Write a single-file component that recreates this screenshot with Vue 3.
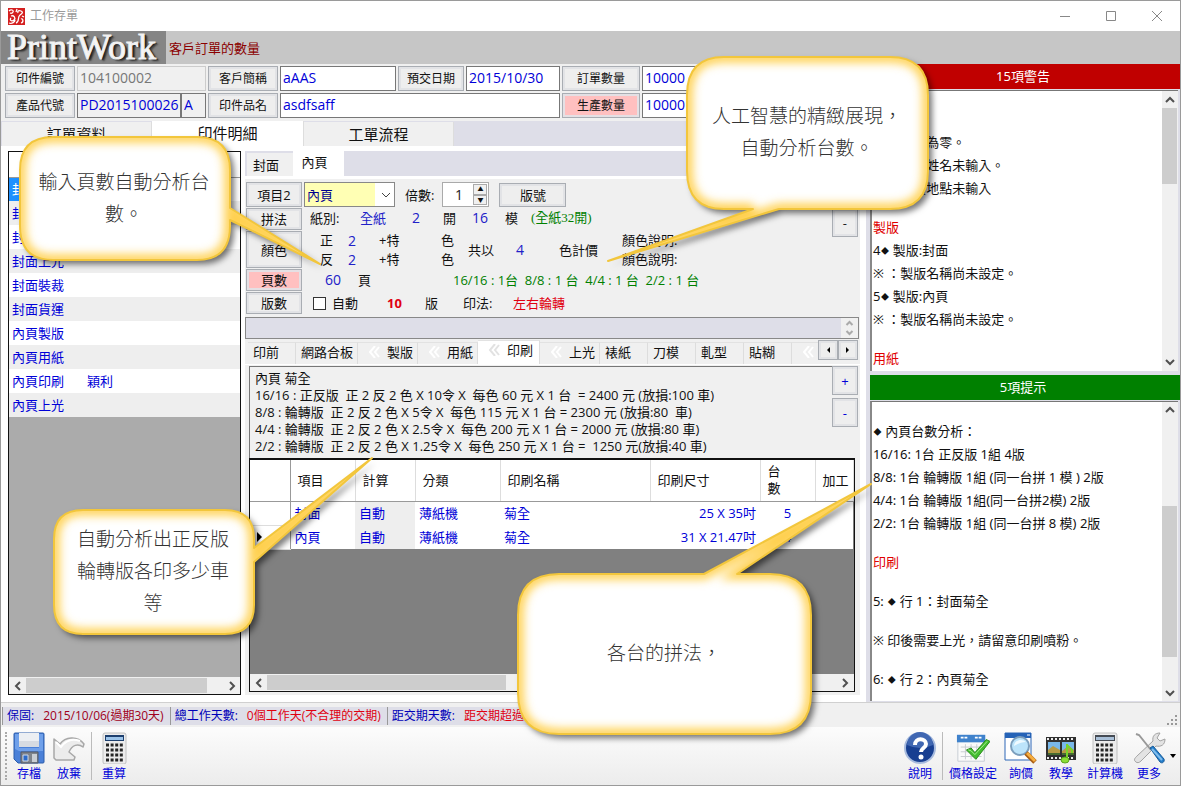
<script setup>
import { ref } from 'vue'

const mainTabs = ['訂單資料', '印件明細', '工單流程']
const activeMain = ref(1)

const steps = [
  ['封面', ''], ['封面用紙', ''], ['封面印刷', ''], ['封面上光', ''], ['封面裝裁', ''],
  ['封面貨運', ''], ['內頁製版', ''], ['內頁用紙', ''], ['內頁印刷', '穎利'], ['內頁上光', '']
]

const processTabs = [
  { name: '印前', w: 'w48' },
  { name: '網路合板', w: 'w62' },
  { name: '製版', w: 'w60', mark: true },
  { name: '用紙', w: 'w60', mark: true },
  { name: '印刷', w: 'w62', mark: true, active: true },
  { name: '上光', w: 'w60', mark: true },
  { name: '裱紙', w: 'w48' },
  { name: '刀模', w: 'w48' },
  { name: '軋型', w: 'w48' },
  { name: '貼糊', w: 'w48' },
  { name: '', w: 'rest', mark: true }
]

const pressLines = [
  '內頁 菊全',
  '16/16 : 正反版  正 2 反 2 色 X 10令 X  每色 60 元 X 1 台  = 2400 元 (放損:100 車)',
  '8/8 : 輪轉版  正 2 反 2 色 X 5令 X  每色 115 元 X 1 台 = 2300 元 (放損:80  車)',
  '4/4 : 輪轉版  正 2 反 2 色 X 2.5令 X  每色 200 元 X 1 台 = 2000 元 (放損:80 車)',
  '2/2 : 輪轉版  正 2 反 2 色 X 1.25令 X  每色 250 元 X 1 台 =  1250 元(放損:40 車)'
].join('\n')

const pressRows = [
  ['封面', '自動', '薄紙機', '菊全', '25 X 35吋', '5'],
  ['內頁', '自動', '薄紙機', '菊全', '31 X 21.47吋', '4']
]

const warnings = [
  { t: '※ ：數量為零。' },
  { t: '※ ：客戶姓名未輸入。' },
  { t: '※ ：送貨地點未輸入' },
  { t: '製版', head: true },
  { t: '4◆ 製版:封面' },
  { t: '※ ：製版名稱尚未設定。' },
  { t: '5◆ 製版:內頁' },
  { t: '※ ：製版名稱尚未設定。' },
  { t: '用紙', head: true }
]
const hints = [
  { t: '◆ 內頁台數分析：' },
  { t: '16/16: 1台 正反版 1組 4版' },
  { t: '8/8: 1台 輪轉版 1組 (同一台拼 1 模 ) 2版' },
  { t: '4/4: 1台 輪轉版 1組(同一台拼2模) 2版' },
  { t: '2/2: 1台 輪轉版 1組 (同一台拼 8 模) 2版' },
  { t: '印刷', head: true },
  { t: '5: ◆ 行 1：封面菊全', gap: true },
  { t: '※ 印後需要上光，請留意印刷噴粉。', gap: true },
  { t: '6: ◆ 行 2：內頁菊全', gap: true }
]
const parts = (t) => t.split(/(◆)/)

const callouts = [
  { id: 'pages', w: 330, h: 150, lines: ['輸入頁數自動分析台', '數。'],
    d: 'M34 1H178Q211 1 211 34V72L301 128L211 84V90Q211 124 178 124H34Q1 124 1 90V34Q1 1 34 1Z' },
  { id: 'signatures', w: 350, h: 230, lines: ['人工智慧的精緻展現，', '自動分析台數。'],
    d: 'M117 1H283Q321 1 321 39V115Q321 153 283 153H172L1 205L146 153H117Q80 153 80 115V39Q80 1 117 1Z' },
  { id: 'runs', w: 340, h: 200, lines: ['自動分析出正反版', '輪轉版各印多少車', '等'],
    d: 'M30 53H172Q201 53 201 82V91L319 1L201 105V148Q201 177 172 177H30Q1 177 1 148V82Q1 53 30 53Z' },
  { id: 'imposition', w: 380, h: 270, lines: ['各台的拼法，'],
    d: 'M42 91H187L354 1L220 91H253Q294 91 294 132V210Q294 251 253 251H42Q1 251 1 210V132Q1 91 42 91Z' }
]
</script>

<template>
  <div class="window" lang="zh-TW">
    <header class="titlebar">
      <svg class="app-icon" viewBox="0 0 17 17" aria-hidden="true">
        <rect width="17" height="17" fill="#d42020" />
        <path d="M1 3c2-2 5-1 4 1s-3 1-3 1M3 8c3-1 5 2 3 4s-5 0-3-2M8 15c4-1 1-6 4-8s3-3 1-4-4 0-3 2M1 15c3 1 6-1 6-3M13 15c3-1 2-5 0-4M14 8l2 1M9 1L8 4" fill="none" stroke="#fff" stroke-width="1.3" />
      </svg>
      <h1>工作存單</h1>
      <button class="win-btn" aria-label="最小化"><svg viewBox="0 0 12 12"><path d="M1 6.500h10" /></svg></button>
      <button class="win-btn" aria-label="最大化"><svg viewBox="0 0 12 12"><path d="M1.500 1.500h9v9h-9z" /></svg></button>
      <button class="win-btn" aria-label="關閉"><svg viewBox="0 0 12 12"><path d="M1 1l10 10M11 1L1 11" /></svg></button>
    </header>

    <div class="banner">
      <div class="brand">PrintWork</div>
      <div class="banner-text">客戶訂單的數量</div>
    </div>

    <div class="body">
      <main class="left">
        <form class="fields" @submit.prevent>
          <div class="frow">
            <label class="raised l70" for="f1">印件編號</label>
            <input id="f1" class="box i129 off" value="104100002" readonly />
            <label class="raised l70" for="f2">客戶簡稱</label>
            <input id="f2" class="box i116" value="aAAS" />
            <label class="raised l66" for="f3">預交日期</label>
            <input id="f3" class="box i94" value="2015/10/30" />
            <label class="raised l78" for="f4">訂單數量</label>
            <input id="f4" class="box grow" value="10000" />
          </div>
          <div class="frow">
            <label class="raised l70" for="f5">產品代號</label>
            <div class="pair i129">
              <input id="f5" class="box grow off2" value="PD2015100026" />
              <input class="box i26 off2" value="A" aria-label="版次" />
            </div>
            <label class="raised l70" for="f6">印件品名</label>
            <input id="f6" class="box i280" value="asdfsaff" />
            <label class="raised pink l78" for="f7">生產數量</label>
            <input id="f7" class="box grow" value="10000" />
          </div>
        </form>

        <nav class="main-tabs">
          <button v-for="(t, i) in mainTabs" :key="t" :class="{ on: activeMain === i }" @click="activeMain = i">{{ t }}</button>
        </nav>

        <div class="page">
          <section class="steps">
            <table>
              <thead><tr><th>工序</th><th></th></tr></thead>
              <tbody>
                <tr v-for="(s, i) in steps" :key="i" :class="{ sel: i === 0 }"><td>{{ s[0] }}</td><td>{{ s[1] }}</td></tr>
              </tbody>
            </table>
            <div class="hbar">
              <button aria-label="向左"><svg viewBox="0 0 8 10"><path d="M6 1L2 5l4 4" /></svg></button>
              <div class="track"><div class="thumb wide"></div></div>
              <button aria-label="向右"><svg viewBox="0 0 8 10"><path d="M2 1l4 4-4 4" /></svg></button>
            </div>
          </section>

          <section class="detail">
            <nav class="sub-tabs"><button>封面</button><button class="on">內頁</button></nav>

            <div class="spec">
              <div class="spec-keys">
                <button class="raised h25">項目2</button>
                <button class="raised h22">拼法</button>
                <button class="raised h37">顏色</button>
                <button class="raised pink h22">頁數</button>
                <button class="raised h22">版數</button>
              </div>
              <div class="spec-vals">
                <div class="line item">
                  <div class="combo">
                    <select aria-label="項目"><option>內頁</option></select>
                    <svg viewBox="0 0 10 6" aria-hidden="true"><path d="M1 1l4 4 4-4" /></svg>
                  </div>
                  <label for="mult">倍數:</label>
                  <div class="spin">
                    <input id="mult" value="1" />
                    <div><button aria-label="增加">▲</button><button aria-label="減少">▼</button></div>
                  </div>
                  <button class="raised plate">版號</button>
                </div>
                <div class="line cols paper">
                  <span>紙別:</span><b>全紙</b><b>2</b><span>開</span><b>16</b><span>模</span><i>(全紙32開)</i>
                </div>
                <div class="colors">
                  <div class="side"><span>正</span><b>2</b><span>+特</span><span>色</span></div>
                  <div class="side"><span>反</span><b>2</b><span>+特</span><span>色</span></div>
                  <div class="total"><span>共以</span><b>4</b><span>色計價</span></div>
                  <div class="note n1">顏色說明:</div>
                  <div class="note n2">顏色說明:</div>
                </div>
                <div class="line cols count">
                  <b>60</b><span>頁</span><i>16/16 : 1台&nbsp; 8/8 : 1 台&nbsp; 4/4 : 1 台&nbsp; 2/2 : 1 台</i>
                </div>
                <div class="line cols plates">
                  <label><input type="checkbox" />自動</label><strong>10</strong><span>版</span><span>印法:</span><em>左右輪轉</em>
                </div>
              </div>
              <div class="pm top"><button class="raised">+</button><button class="raised">-</button></div>
            </div>

            <div class="memo">
              <span></span>
              <svg viewBox="0 0 16 20" aria-hidden="true"><path d="M5 7l3-3 3 3M5 13l3 3 3-3" /></svg>
            </div>

            <nav class="proc-tabs">
              <button v-for="(p, i) in processTabs" :key="i" :class="[p.w, { on: p.active }]" :aria-label="p.name || '其他'">
                <svg v-if="p.mark" viewBox="0 0 12 12" aria-hidden="true"><path d="M7 0L2 6l5 6M11 1L7 6l4 5" /></svg>
                <span>{{ p.name }}</span>
              </button>
              <div class="tab-nav"><button class="raised" aria-label="前一頁籤"><svg viewBox="0 0 6 8"><path d="M5 1v6L2 4z" /></svg></button><button class="raised" aria-label="後一頁籤"><svg viewBox="0 0 6 8"><path d="M1 1v6l3-3z" /></svg></button></div>
            </nav>

            <div class="press">
              <div class="press-top">
                <pre>{{ pressLines }}</pre>
                <div class="pm"><button class="raised">+</button><button class="raised">-</button></div>
              </div>
              <div class="grid">
                <table>
                  <colgroup><col class="c40" /><col class="c65" /><col class="c60" /><col class="c85" /><col class="c150" /><col class="c110" /><col class="c55" /><col /></colgroup>
                  <thead><tr><th></th><th>項目</th><th>計算</th><th>分類</th><th>印刷名稱</th><th>印刷尺寸</th><th>台<br />數</th><th>加工</th></tr></thead>
                  <tbody>
                    <tr v-for="(r, i) in pressRows" :key="i">
                      <td class="mark"><svg v-if="i === 1" viewBox="0 0 6 10"><path d="M0 0l5 5-5 5z" /></svg></td>
                      <td>{{ r[0] }}</td><td class="auto">{{ r[1] }}</td><td>{{ r[2] }}</td><td>{{ r[3] }}</td>
                      <td class="num">{{ r[4] }}</td><td class="mid">{{ r[5] }}</td><td></td>
                    </tr>
                  </tbody>
                </table>
                <div class="hbar">
                  <button aria-label="向左"><svg viewBox="0 0 8 10"><path d="M6 1L2 5l4 4" /></svg></button>
                  <div class="track"><div class="thumb half"></div></div>
                  <button aria-label="向右"><svg viewBox="0 0 8 10"><path d="M2 1l4 4-4 4" /></svg></button>
                </div>
              </div>
            </div>
          </section>
        </div>
      </main>

      <aside class="right">
        <h2 class="red">15項警告</h2>
        <section class="log warn">
          <div class="text">
            <p v-for="(l, i) in warnings" :key="i" :class="{ head: l.head }"><span v-for="(s, j) in parts(l.t)" :key="j" :class="{ dia: s === '◆' }">{{ s }}</span></p>
          </div>
          <div class="vbar">
            <button aria-label="向上"><svg viewBox="0 0 10 8"><path d="M1 6l4-4 4 4" /></svg></button>
            <div class="track"><div class="thumb t1"></div></div>
            <button aria-label="向下"><svg viewBox="0 0 10 8"><path d="M1 2l4 4 4-4" /></svg></button>
          </div>
        </section>
        <h2 class="green">5項提示</h2>
        <section class="log hint">
          <div class="text">
            <p v-for="(l, i) in hints" :key="i" :class="{ head: l.head, gap: l.gap }"><span v-for="(s, j) in parts(l.t)" :key="j" :class="{ dia: s === '◆' }">{{ s }}</span></p>
          </div>
          <div class="vbar">
            <button aria-label="向上"><svg viewBox="0 0 10 8"><path d="M1 6l4-4 4 4" /></svg></button>
            <div class="track low"><div class="thumb t2"></div></div>
            <button aria-label="向下"><svg viewBox="0 0 10 8"><path d="M1 2l4 4 4-4" /></svg></button>
          </div>
        </section>
      </aside>
    </div>

    <footer class="status">
      <div><span>保固:</span><b class="dark">2015/10/06(過期30天)</b></div>
      <div><span>總工作天數:</span><b>0個工作天(不合理的交期)</b></div>
      <div><span>距交期天數:</span><b>距交期超過30天</b></div>
      <svg class="sizer" viewBox="0 0 12 12" aria-hidden="true"><path d="M9 1h2v2H9zM5 5h2v2H5zM9 5h2v2H9zM1 9h2v2H1zM5 9h2v2H5zM9 9h2v2H9z" /></svg>
    </footer>

    <div class="toolbar">
      <span class="grip"></span>
      <button class="tool w40">
        <svg viewBox="0 0 32 32"><path d="M2 1h28q1 0 1 1v28q0 1-1 1H5l-4-4V2q0-1 1-1z" fill="#4a80d8" stroke="#2b5cab" /><path d="M2 2h4v14h20V2h4v17H6l-4-2z" fill="#6fa0ea" /><path d="M6 1h20v14H6z" fill="#eceff3" /><path d="M6 9h20v6H6z" fill="#d6dbe2" /><path d="M8 20h17v11H8z" fill="#7e848c" stroke="#555b66" /><path d="M19 22h5v8h-5z" fill="#c9ced4" /><path d="M10 23h5v6h-5z" fill="#2b6ac8" stroke="#cdd8e8" /></svg>
        <span>存檔</span>
      </button>
      <button class="tool w40">
        <svg viewBox="0 0 32 32"><path d="M1 7l6 5C12 5 24 3 31 12l-1 3c-5-4-11-2-14 5l6 5-1 3H3L1 26z" fill="#ececec" stroke="#a8a8a8" stroke-width="1.500" stroke-linejoin="round" /><path d="M3 10l5 5c5-7 11-9 19-6" fill="none" stroke="#fff" stroke-width="2" /></svg>
        <span>放棄</span>
      </button>
      <span class="sep"></span>
      <button class="tool w40">
        <svg viewBox="0 0 32 32"><rect x="5" y="1" width="23" height="31" rx="2" fill="#ececec" stroke="#c0c0c0" /><path d="M7 3h19v6H7z" fill="#1d3f6e" /><path d="M8 5h17v3H8z" fill="#9cc4ea" /><path d="M8 13h17M8 18h17M8 23h17M8 28h17" stroke="#252525" stroke-width="3" stroke-dasharray="3 1.600" /></svg>
        <span>重算</span>
      </button>
      <span class="space"></span>
      <button class="tool w40">
        <svg viewBox="0 0 32 32"><circle cx="16" cy="16" r="15" fill="#183f91" stroke="#a7bbde" stroke-width="2" /><path d="M3 13a13 13 0 0 1 26 0Q16 19 3 13z" fill="#4067b2" /><path d="M11 13c0-8 11-7 11-1 0 4-5 4-5 8" fill="none" stroke="#fff" stroke-width="4" /><circle cx="17" cy="25" r="2.500" fill="#fff" /></svg>
        <span>說明</span>
      </button>
      <span class="sep"></span>
      <button class="tool w56">
        <svg viewBox="0 0 36 32"><path d="M2 3h28v27H2z" fill="#fafafa" stroke="#c5cbd2" /><path d="M1 2h30v8H1z" fill="#3f82cc" /><path d="M5 5h7M20 5h8" stroke="#fff" stroke-width="2" stroke-dasharray="3 1" /><path d="M5 15h22M5 20h22M5 25h22M10 12v16M16 12v16M22 12v16" stroke="#c7cbd0" /><path d="M11 18l5-2 4 5L32 7l4 2-15 19z" fill="#44bd30" stroke="#248817" /><path d="M13 18l3 1 4 4L33 9" fill="none" stroke="#a8f090" /></svg>
        <span>價格設定</span>
      </button>
      <button class="tool w40">
        <svg viewBox="0 0 34 32"><path d="M1 1h26v27H1z" fill="#fff" stroke="#2d67b7" /><path d="M1 1h26v5H1z" fill="#2563b7" /><path d="M23 3h3" stroke="#fff" /><circle cx="16" cy="14" r="9" fill="#bce4fa" stroke="#7c9fbd" stroke-width="2" /><path d="M10 14c0-6 8-8 12-4-4 0-9 2-12 4z" fill="#effaff" /><path d="M22 21l9 9" stroke="#a85e14" stroke-width="5" /><path d="M23 21l8 8" stroke="#f6ae3f" stroke-width="3" /></svg>
        <span>詢價</span>
      </button>
      <button class="tool w40">
        <svg viewBox="0 0 32 32"><path d="M1 5h30v23H1z" fill="#303030" /><path d="M2 7h28M2 26h28" stroke="#eee" stroke-width="2" stroke-dasharray="2 2" /><path d="M3 10h12v13H3zM17 10h12v13H17z" fill="#79b8e9" /><path d="M3 18l5-4 7 4v5H3zM17 19l6-5 6 4v5H17z" fill="#b79b45" /><path d="M3 21h12v2H3zM17 21h12v2H17z" fill="#466b31" /><path d="M22 12v15M22 13l5 5v3" fill="none" stroke="#79d329" stroke-width="2" /><ellipse cx="20" cy="28" rx="4" ry="3" fill="#8ade35" stroke="#58a21c" /></svg>
        <span>教學</span>
      </button>
      <button class="tool w48">
        <svg viewBox="0 0 32 32"><rect x="4" y="1" width="24" height="31" rx="2" fill="#ececec" stroke="#c0c0c0" /><path d="M6 3h20v6H6z" fill="#454b54" /><path d="M7 5h18v3H7z" fill="#a9c0d8" /><path d="M7 13h18M7 18h18M7 23h18M7 28h18" stroke="#252525" stroke-width="3" stroke-dasharray="3 1.600" /></svg>
        <span>計算機</span>
      </button>
      <button class="tool w40">
        <svg viewBox="0 0 32 32"><path d="M3 30c-3-2-1-4 1-6L20 9c-1-5 2-8 7-8l-3 5 3 3 5-2c0 6-4 8-9 7L8 29c-2 2-4 2-5 1z" fill="#e3e3e3" stroke="#a3a3a3" /><path d="M3 2l3 1 12 15" fill="none" stroke="#999" stroke-width="2" /><path d="M17 16l3-2 11 13c1 3-2 5-4 3z" fill="#237dca" stroke="#185b99" /><path d="M19 17l10 11" stroke="#81bdec" stroke-width="2" /></svg>
        <span>更多</span>
      </button>
      <svg class="drop" viewBox="0 0 8 4" aria-hidden="true"><path d="M1 0h6L4 4z" /></svg>
    </div>

    <div v-for="c in callouts" :key="c.id" class="callout" :class="c.id">
      <svg :width="c.w" :height="c.h" aria-hidden="true">
        <defs>
          <clipPath :id="'clip-' + c.id"><path :d="c.d" /></clipPath>
          <filter :id="'soft-' + c.id" x="-20%" y="-20%" width="140%" height="140%"><feGaussianBlur stdDeviation="5" /></filter>
        </defs>
        <path class="shape" :d="c.d" />
        <g :clip-path="`url(#clip-${c.id})`"><path class="glow" :d="c.d" :filter="`url(#soft-${c.id})`" /></g>
        <path class="edge" :d="c.d" />
      </svg>
      <p><span v-for="l in c.lines" :key="l">{{ l }}</span></p>
    </div>
  </div>
</template>

<style>
html, body { margin: 0; background: #f0f0f0; }
</style>

<style scoped>
* { box-sizing: border-box; }
.window {
  position: relative; display: flex; flex-direction: column; height: 100vh; min-height: 720px; overflow: hidden;
  border: 1px solid #9a9a9a; background: #f0f0f0; color: #111;
  font-family: "Open Sans", "Noto Sans CJK TC", sans-serif; font-size: 13px; line-height: 18px;
}
button, input, select { font: inherit; color: inherit; margin: 0; padding: 0; border: 0; background: none; border-radius: 0; }
h1, h2, p, pre { margin: 0; font-weight: 400; }
b, i, em { font-weight: 400; font-style: normal; }
svg { display: block; }

.titlebar { display: flex; flex: none; align-items: center; height: 30px; background: #fff; padding-left: 7px; }
.app-icon { width: 17px; height: 17px; }
.titlebar h1 { flex: 1; margin-left: 5px; font-size: 12px; color: #9b9b9b; }
.win-btn { width: 46px; height: 30px; }
.win-btn svg { width: 12px; height: 12px; margin: auto; fill: none; stroke: #888; }

.banner { display: flex; flex: none; align-items: center; height: 33px; background: #c6c6c6; }
.brand {
  width: 165px; height: 33px; padding-left: 6px; background: #858585; color: #f6f6f6; line-height: 33px;
  font-family: "Liberation Serif", serif; font-size: 36px; white-space: nowrap;
  -webkit-text-stroke: 1px #f0f0f0; text-shadow: 2px 1px 1px #222, 3px 2px 2px #333;
}
.banner-text { margin-left: 3px; color: #8b0000; }

.body { display: flex; flex: 1; min-height: 0; }
.left { display: flex; flex: 1; flex-direction: column; min-width: 0; background: #dedee8; }
.fields { display: flex; flex-direction: column; gap: 2px; padding: 2px 4px 3px; background: #f0f0f0; }
.frow { display: flex; gap: 2px; height: 25px; }
.raised {
  display: flex; flex: none; align-items: center; justify-content: center; background: #eee;
  border: 1px solid #a9adb3; box-shadow: inset 0 0 0 2px #e2e3e6; color: #111;
}
.frow .raised { font-size: 12px; }
.pink { background: #ffc0c0; box-shadow: inset 0 0 0 2px #e4e0e4; }
.box { min-width: 0; padding: 0 0 2px 2px; border: 1px solid #777; background: #fff; color: #0000d8; font-size: 14px; }
.off { background: #f0f0f0; border-color: #ccc; color: #777; }
.off2 { background: #f0f0f0; }
.pair { display: flex; flex: none; }
.grow { flex: 1; }
.l66 { width: 66px; } .l70 { width: 70px; } .l78 { width: 78px; }
.i26 { width: 26px; } .i94 { width: 94px; } .i116 { width: 116px; } .i129 { width: 129px; } .i280 { width: 280px; }
.pair .i26 { width: 25px; }

.main-tabs { display: flex; flex: none; align-items: flex-end; height: 25px; padding-left: 1px; }
.main-tabs button { width: 150px; height: 24px; background: #f0f0f0; border-right: 1px solid #ddd; font-size: 15px; }
.main-tabs .on { width: 152px; height: 25px; background: #fff; padding-bottom: 2px; }

.page { display: flex; flex: 1; gap: 4px; min-height: 0; margin-right: 4px; padding: 5px 6px 7px 7px; background: #fff; }
.steps { display: flex; flex: none; flex-direction: column; width: 233px; border: 1px solid #111; background: #ababab; }
table { width: 100%; border-collapse: collapse; table-layout: fixed; }
th, td { padding: 0; font-weight: 400; text-align: left; }
.steps th { height: 25px; padding-left: 10px; background: #fff; border-bottom: 1px solid #999; }
.steps td { height: 24px; padding: 0 3px; color: #0000d8; }
.steps th:first-child { width: 75px; }
.steps tbody tr { background: #fff; }
.steps tbody tr:nth-child(even) { background: #eee; }
.steps .sel td:first-child { background: #1e90ff; color: #fff; }

.hbar { display: flex; flex: none; height: 17px; margin-top: auto; background: #f0f0f0; }
.hbar button { width: 17px; }
.hbar svg { width: 8px; height: 10px; margin: auto; }
.hbar path, .vbar path { fill: none; stroke: #505050; stroke-width: 2; }
.track { flex: 1; }
.hbar .thumb { height: 15px; margin-top: 1px; background: #cdcdcd; }
.wide { width: 92%; } .half { width: 42%; }

.detail { display: flex; flex: 1; flex-direction: column; min-width: 0; background: #f0f0f0; }
.sub-tabs { display: flex; flex: none; align-items: flex-end; height: 28px; padding-left: 2px; background: #dedee8; border-bottom: 3px solid #fff; }
.sub-tabs button { width: 46px; height: 23px; padding-right: 8px; background: #f0f0f0; }
.sub-tabs .on { width: 51px; height: 25px; background: #fff; padding-bottom: 3px; }

.spec { display: flex; flex: none; height: 138px; }
.spec-keys { display: flex; flex: none; flex-direction: column; gap: 1px; width: 57px; padding: 3px 0 0 1px; }
.h25 { height: 25px; } .h22 { height: 22px; } .h37 { height: 37px; }
.spec-vals { flex: 1; min-width: 0; padding: 3px 0 0 2px; white-space: nowrap; }
.spec-vals b { color: #2020c8; font-size: 14px; }
.spec-vals i { color: #008000; }
.spec-vals em, .spec-vals strong { color: #e00010; }
.line { display: flex; align-items: center; height: 24px; }
.cols { display: grid; }
.item { height: 25px; gap: 10px; }
.combo { position: relative; width: 91px; height: 25px; border: 1px solid #888; background: #fff; }
.combo select { width: 100%; height: 23px; padding-left: 2px; appearance: none; background: linear-gradient(90deg, #ffffb4 70px, #fff 70px); color: #000090; }
.combo svg { position: absolute; right: 3px; top: 9px; width: 10px; height: 6px; fill: none; stroke: #444; pointer-events: none; }
.spin { display: flex; width: 47px; height: 25px; margin-left: -2px; padding: 1px; border: 1px solid #aaa; background: #fff; }
.spin input { flex: 1; min-width: 0; width: 20px; text-align: center; font-size: 14px; color: #222; }
.spin div { display: flex; flex-direction: column; width: 14px; }
.spin button { flex: 1; border: 1px solid #aaa; background: #f0f0f0; font-size: 6px; line-height: 8px; }
.plate { width: 67px; height: 24px; }
.paper { grid-template-columns: 50px 52px 31px 29px 33px 26px 1fr; padding-left: 6px; height: 22px; }
.paper i { font-family: "Liberation Serif", "Noto Sans CJK TC", serif; }
.paper b:nth-child(2) { font-size: 13px; }
.colors { display: grid; grid-template-columns: 146px 154px 1fr; grid-template-rows: 19px 19px; padding-top: 2px; height: 40px; }
.side { display: grid; grid-column: 1; grid-template-columns: 28px 31px 62px 1fr; align-items: center; padding-left: 16px; }
.side b, .side span { line-height: 19px; }
.total { display: grid; grid-column: 2; grid-row: 1 / 3; grid-template-columns: 48px 43px 1fr; align-items: center; padding-left: 18px; }
.note { grid-column: 3; line-height: 19px; padding-left: 18px; }
.n1 { grid-row: 1; } .n2 { grid-row: 2; }
.count { grid-template-columns: 33px 95px 1fr; height: 22px; padding-left: 21px; }
.plates { grid-template-columns: 74px 38px 38px 50px 1fr; padding-left: 9px; }
.plates label { display: flex; align-items: center; gap: 6px; }
.plates input { appearance: none; width: 13px; height: 13px; border: 1px solid #333; background: #fff; }
.pm { display: flex; flex: none; flex-direction: column; gap: 3px; width: 26px; margin-right: 2px; }
.pm button { height: 29px; color: #0000d8; }
.pm.top { gap: 0; }
.pm.top button { color: #222; }

.memo { display: flex; flex: none; justify-content: space-between; height: 22px; margin-right: 1px; border: 1px solid #888; background: #f0f0f0; }
.memo span { flex: 1; background: #dedee8; }
.memo svg { width: 17px; height: 20px; fill: none; stroke: #aaa; stroke-width: 2; }

.proc-tabs { display: flex; flex: none; align-items: flex-end; height: 25px; margin-top: 1px; padding-left: 3px; border-bottom: 1px solid #fff; background: #f0f0f0; }
.proc-tabs > button { display: flex; flex: none; align-items: center; height: 22px; padding: 0 5px 3px; border-right: 1px solid #ddd; border-top: 1px solid #e2e2e2; white-space: nowrap; }
.proc-tabs > button svg { flex: none; width: 12px; height: 12px; margin: 0 7px 0 5px; fill: none; stroke: #fff; stroke-width: 2; }
.proc-tabs > .on { height: 24px; background: #fff; padding-bottom: 5px; }
.proc-tabs > .on svg { stroke: #e2e2e2; }
.w48 { width: 48px; } .w60 { width: 60px; } .w62 { width: 62px; }
.proc-tabs > .rest { flex: 1; min-width: 0; border-right: 0; overflow: hidden; }
.tab-nav { display: flex; flex: none; align-self: flex-start; width: 40px; margin-right: 2px; }
.tab-nav button { width: 20px; height: 20px; }
.tab-nav svg { width: 6px; height: 8px; }

.press { display: flex; flex: 1; flex-direction: column; min-height: 0; padding: 1px 0 3px 4px; }
.press-top { display: flex; flex: none; height: 92px; }
.press pre { flex: 1; min-width: 0; padding: 3px 5px; border-top: 1px solid #777; border-left: 1px solid #777; font: inherit; line-height: 17px; white-space: pre; overflow: hidden; }
.grid { display: flex; flex: 1; flex-direction: column; min-height: 0; margin-right: 5px; border: 1px solid #111; border-top-width: 2px; background: #808080; }
.grid thead tr, .grid tbody tr { background: #fff; }
.grid th { height: 41px; padding-left: 7px; border-right: 1px solid #ddd; border-bottom: 1px solid #999; line-height: 17px; }
.grid td { height: 24px; padding: 0 4px; color: #0000d8; }
.grid th:first-child, .grid td:first-child { border-right: 1px solid #999; }
.grid .mark { padding: 0 0 0 7px; border-bottom: 1px solid #ddd; }
.mark svg { width: 6px; height: 10px; }
.auto { background: #eee; }
.grid .num { text-align: right; }
.grid .mid { text-align: center; }
.c40 { width: 40px; } .c60 { width: 60px; } .c65 { width: 65px; } .c85 { width: 85px; } .c150 { width: 150px; } .c110 { width: 110px; } .c55 { width: 55px; }

.right { display: flex; flex: none; flex-direction: column; width: 26.3%; background: #dedee8; font-family: "Noto Sans", "Noto Sans CJK TC", sans-serif; }
.right h2 { flex: none; height: 25px; padding-right: 4px; color: #fff; font-size: 13px; line-height: 25px; text-align: center; }
.red { background: #c00000; }
.green { margin-top: 4px; background: #008000; }
.log { display: flex; min-height: 0; margin: 1px 2px 0 0; border-top: 1px solid #777; border-left: 2px solid #888; background: #fff; }
.warn { flex: 280; }
.hint { flex: 300; margin-bottom: 1px; }
.text { flex: 1; min-width: 0; padding-left: 1px; overflow: hidden; white-space: nowrap; }
.text p { height: 23px; line-height: 23px; white-space: pre; }
.text .head { margin-top: 16px; color: #e00000; }
.text .gap { margin-top: 16px; }
.text .dia { display: inline-block; width: 9px; font-size: 8px; text-align: center; vertical-align: top; }
.warn .text { padding-top: 40px; }
.hint .text { padding-top: 18px; }
.vbar { display: flex; flex: none; flex-direction: column; width: 16px; background: #f0f0f0; }
.vbar button { height: 17px; }
.vbar svg { width: 10px; height: 8px; margin: auto; }
.vbar .thumb { width: 15px; background: #cdcdcd; }
.t1 { height: 31%; }
.low { display: flex; align-items: flex-end; }
.t2 { height: 57%; margin-bottom: 27px; }

.status { display: flex; flex: none; align-items: stretch; height: 25px; padding: 4px 0 2px 1px; border-top: 1px solid #d0d0d0; font-size: 12px; white-space: nowrap; }
.status div { display: flex; gap: 9px; padding: 0 6px 0 4px; border-left: 1px solid #999; background: #dedee8; color: #0000b8; }
.status b { color: #e00010; }
.status .dark { color: #a00020; }
.sizer { width: 12px; height: 12px; margin: 7px 2px 0 auto; fill: #999; }

.toolbar { display: flex; flex: none; align-items: flex-start; height: 58px; padding: 5px 3px 0 4px; background: linear-gradient(#fcfcfc, #ececec); }
.grip { width: 3px; height: 48px; margin-right: 1px; border-left: 2px dotted #aaa; }
.tool { display: flex; flex: none; flex-direction: column; align-items: center; color: #0000d8; font-size: 12px; line-height: 18px; white-space: nowrap; }
.tool svg { width: 34px; height: 32px; }
.tool span { margin-top: 1px; }
.w40.tool { width: 40px; } .w48.tool { width: 48px; } .w56.tool { width: 56px; }
.sep { width: 1px; height: 48px; margin: 0 2px; background: #bbb; }
.space { flex: 1; }
.drop { width: 8px; height: 4px; margin-top: 22px; }

.callout { position: absolute; pointer-events: none; }
.callout svg { overflow: visible; }
.shape { fill: #fff; filter: drop-shadow(4px 4px 3px rgba(0, 0, 0, .55)); }
.glow { fill: none; stroke: #ffd050; stroke-width: 11; }
.edge { fill: none; stroke: #f2c63c; stroke-width: 2; stroke-linejoin: round; }
.callout p { position: absolute; display: flex; flex-direction: column; justify-content: center; text-align: center; white-space: nowrap; color: #333; font-size: 19px; font-weight: 300; line-height: 32px; }
.pages { left: 18px; top: 135px; }
.pages p { left: 0; top: 0; width: 210px; height: 124px; }
.signatures { left: 606px; top: 55px; }
.signatures p { left: 80px; top: 0; width: 240px; height: 152px; }
.runs { left: 52px; top: 456px; }
.runs p { left: 0; top: 52px; width: 200px; height: 124px; }
.imposition { left: 516px; top: 482px; }
.imposition p { left: 0; top: 90px; width: 294px; height: 160px; }
</style>
